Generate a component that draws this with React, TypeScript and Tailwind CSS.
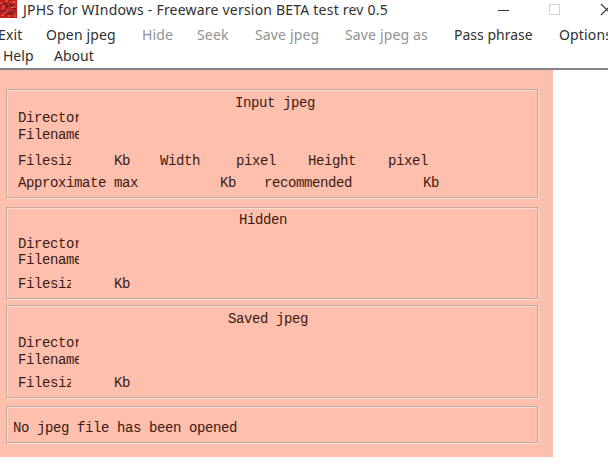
import type { ReactNode } from "react";

const menuText = "text-[14px] whitespace-nowrap leading-[20px]";

function Group({ className, children }: { className: string; children: ReactNode }) {
  return (
    <section className={`w-[532px] border border-[#c0aaa2] shadow-[inset_1px_1px_0_#f4ded2,1px_1px_0_#f4ded2] ${className}`}>
      {children}
    </section>
  );
}

function Line({ className = "", children }: { className?: string; children: ReactNode }) {
  return <div className={`flex h-[17px] leading-[17px] ${className}`}>{children}</div>;
}

function Cell({ className = "", children }: { className?: string; children: ReactNode }) {
  return <span className={`block shrink-0 overflow-hidden whitespace-pre ${className}`}>{children}</span>;
}

function FileLines({ tight = false }: { tight?: boolean }) {
  return (
    <>
      <Line><Cell className="w-[61px]">Directory</Cell></Line>
      <Line className={tight ? "-mt-px" : ""}><Cell className="w-[61px]">Filename</Cell></Line>
      <Line className={tight ? "mt-[7px]" : "mt-[6px]"}>
        <Cell className="w-[53px]">Filesize</Cell>
        <Cell className="ml-[43px]">Kb</Cell>
      </Line>
    </>
  );
}

function AppIcon() {
  return (
    <svg width="17" height="18" viewBox="0 0 17 18" className="shrink-0">
      <rect width="17" height="18" fill="#bd2023" />
      <path d="M0 2h3v2H0zM5 0h3v2H5zM12 1h4v2h-4zM2 7h2v3H2zM8 4h2v3H8zM13 6h3v2h-3zM6 10h2v3H6zM11 11h2v2h-2zM1 14h3v2H1zM13 15h3v2h-3zM8 15h2v2H8z" fill="#e84535" />
      <path d="M1 5l4-2 2 4 4-3 2 4 3 1M1 12l3-2 4 4 4-2 3 2" fill="none" stroke="#671d20" strokeWidth="1.2" />
      <path d="M3 5h1v2H3zM10 2h1v1h-1zM11 7h2v1h-2zM4 12h2v1H4zM9 9h1v1H9zM14 13h1v1h-1z" fill="#d99b72" />
    </svg>
  );
}

export default function App() {
  return (
    <div className="h-[474px] w-[608px] overflow-hidden bg-white font-['Noto_Sans','Open_Sans',sans-serif] text-[#303030]">
      <header className="h-[70px] border-b-2 border-[#858585]">
        <div className="flex h-[20px] w-[620px] items-start">
          <AppIcon />
          <span className={`${menuText} ml-[6px] w-[366px] tracking-[0.21px]`}>
            JPHS for WIndows - Freeware version BETA test rev 0.5
          </span>
          <svg width="120" height="20" viewBox="0 0 120 20" className="ml-[108px] shrink-0" fill="none">
            <path d="M1 10.5h11" stroke="#353535" />
            <path d="M52.5 4.5h10v10h-10z" stroke="#d2d2d2" />
            <path d="M104 4l11 11M115 4l-11 11" stroke="#353535" strokeWidth="1.2" />
          </svg>
        </div>
        <nav className={menuText}>
          <div className="mt-[5px] flex h-[20px] tracking-[0.15px]">
            <span className="-ml-[2px] w-[48px] shrink-0">Exit</span>
            <span className="w-[96px] shrink-0">Open jpeg</span>
            <span className="w-[55px] shrink-0 text-[#929292]">Hide</span>
            <span className="w-[58px] shrink-0 text-[#929292]">Seek</span>
            <span className="w-[90px] shrink-0 text-[#929292]">Save jpeg</span>
            <span className="w-[109px] shrink-0 text-[#929292]">Save jpeg as</span>
            <span className="w-[105px] shrink-0 tracking-normal">Pass phrase</span>
            <span className="shrink-0">Options</span>
          </div>
          <div className="mt-px flex h-[20px]">
            <span className="ml-[3px] w-[51px]">Help</span>
            <span>About</span>
          </div>
        </nav>
      </header>

      <main className="h-[387px] w-[553px] bg-[#ffbfad] pt-[19px] pl-[6px] font-['Liberation_Mono',monospace] text-[14px] tracking-[-0.4px] text-[#3c1a14]">
        <Group className="h-[109px] pt-[5px] pl-[11px]">
          <Line><Cell className="ml-[217px]">Input jpeg</Cell></Line>
          <div className="-mt-[2px]">
            <Line><Cell className="w-[61px]">Directory</Cell></Line>
            <Line><Cell className="w-[61px]">Filename</Cell></Line>
            <Line className="mt-[9px]">
              <Cell className="w-[53px]">Filesize</Cell>
              <Cell className="ml-[43px] w-[46px]">Kb</Cell>
              <Cell className="w-[76px]">Width</Cell>
              <Cell className="w-[72px]">pixel</Cell>
              <Cell className="w-[80px]">Height</Cell>
              <Cell>pixel</Cell>
            </Line>
            <Line className="mt-[5px]">
              <Cell className="w-[202px]">Approximate max</Cell>
              <Cell className="w-[44px]">Kb</Cell>
              <Cell className="w-[159px]">recommended</Cell>
              <Cell>Kb</Cell>
            </Line>
          </div>
        </Group>
        <Group className="mt-[9px] h-[92px] pt-[4px] pl-[11px]">
          <Line className="mb-[7px]"><Cell className="ml-[221px]">Hidden</Cell></Line>
          <FileLines tight />
        </Group>
        <Group className="mt-[6px] h-[93px] pt-[5px] pl-[11px]">
          <Line className="mb-[7px]"><Cell className="ml-[210px]">Saved jpeg</Cell></Line>
          <FileLines />
        </Group>
        <Group className="mt-[8px] h-[37px] pt-[13px] pl-[6px]">
          <Line><Cell>No jpeg file has been opened</Cell></Line>
        </Group>
      </main>
    </div>
  );
}
